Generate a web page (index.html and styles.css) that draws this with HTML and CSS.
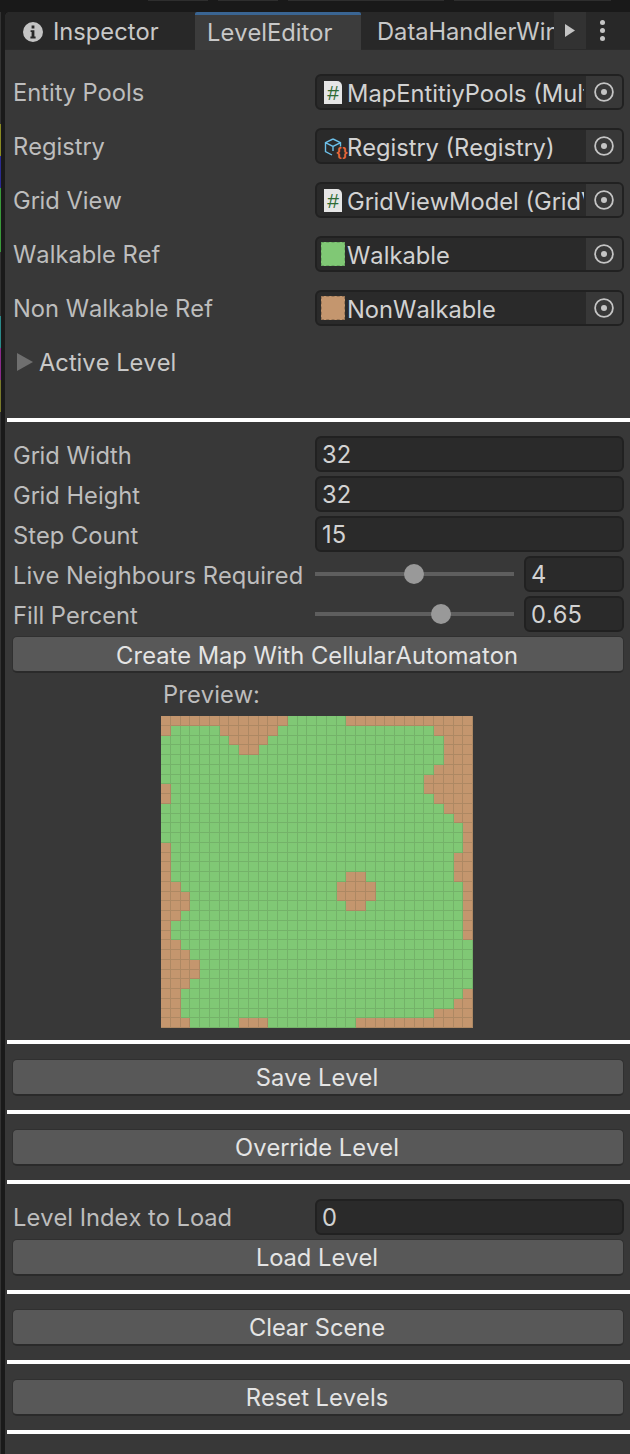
FILE: index.html
```html
<!DOCTYPE html>
<html>
	<head>
		<meta charset="UTF-8">
		<title>LevelEditor</title>
		<link rel="stylesheet" href="styles.css">
	</head>
	<body>
		<div class="topbar">
			<i style="width:60px;margin-left:148px"></i>
			<i style="width:60px"></i>
			<i style="width:156px"></i>
			<i style="width:157px"></i>
		</div>
		<div class="main">
			<div class="gutter"></div>
			<div class="panel">
				<div class="tabs">
					<div class="tab tab-inspector">
						<svg class="tab-icon" width="20" height="20" viewBox="0 0 20 20"><path fill="#c4c4c4" fill-rule="evenodd" d="M10 0a10 10 0 1 0 0 20a10 10 0 0 0 0-20zM8.6 3.6h2.8v2.8H8.6zM7.6 8.2h3.8v6.4h1.2v1.8H7.4v-1.8h1.2v-4.6h-1z"/></svg>
						Inspector
					</div>
					<div class="tab tab-active">LevelEditor</div>
					<div class="tab tab-clip">DataHandlerWindow</div>
					<div class="tab-more"><svg width="10" height="13" viewBox="0 0 10 13"><path fill="#c4c4c4" d="M0 0l10 6.5l-10 6.5z"/></svg></div>
					<div class="tab-menu"><b></b><b></b><b></b></div>
				</div>

				<div class="section refs">
					<div class="row">
						<div class="label">Entity Pools</div>
						<div class="field obj">
							<span class="cs-icon">#</span>
							<span class="obj-name">MapEntitiyPools (MultiPool)</span>
							<span class="picker"><svg width="20" height="20" viewBox="0 0 20 20"><circle cx="10" cy="10" r="8.9" fill="none" stroke="#c4c4c4" stroke-width="1.8"/><circle cx="10" cy="10" r="3" fill="#c4c4c4"/></svg></span>
						</div>
					</div>
					<div class="row">
						<div class="label">Registry</div>
						<div class="field obj">
							<span class="so-icon">
								<svg width="20" height="20" viewBox="0 0 20 20"><path fill="none" stroke="#6cbfe8" stroke-width="1.4" d="M9 1l7.5 3.6v4M9 1L1.5 4.6v9L8 17M1.5 4.6L9 8.4l7.5-3.8M9 8.4V13"/></svg>
								<span class="so-braces">{}</span>
							</span>
							<span class="obj-name">Registry (Registry)</span>
							<span class="picker"><svg width="20" height="20" viewBox="0 0 20 20"><circle cx="10" cy="10" r="8.9" fill="none" stroke="#c4c4c4" stroke-width="1.8"/><circle cx="10" cy="10" r="3" fill="#c4c4c4"/></svg></span>
						</div>
					</div>
					<div class="row">
						<div class="label">Grid View</div>
						<div class="field obj">
							<span class="cs-icon">#</span>
							<span class="obj-name">GridViewModel (GridViewModel)</span>
							<span class="picker"><svg width="20" height="20" viewBox="0 0 20 20"><circle cx="10" cy="10" r="8.9" fill="none" stroke="#c4c4c4" stroke-width="1.8"/><circle cx="10" cy="10" r="3" fill="#c4c4c4"/></svg></span>
						</div>
					</div>
					<div class="row">
						<div class="label">Walkable Ref</div>
						<div class="field obj">
							<span class="swatch swatch-green"></span>
							<span class="obj-name">Walkable</span>
							<span class="picker"><svg width="20" height="20" viewBox="0 0 20 20"><circle cx="10" cy="10" r="8.9" fill="none" stroke="#c4c4c4" stroke-width="1.8"/><circle cx="10" cy="10" r="3" fill="#c4c4c4"/></svg></span>
						</div>
					</div>
					<div class="row">
						<div class="label">Non Walkable Ref</div>
						<div class="field obj">
							<span class="swatch swatch-brown"></span>
							<span class="obj-name">NonWalkable</span>
							<span class="picker"><svg width="20" height="20" viewBox="0 0 20 20"><circle cx="10" cy="10" r="8.9" fill="none" stroke="#c4c4c4" stroke-width="1.8"/><circle cx="10" cy="10" r="3" fill="#c4c4c4"/></svg></span>
						</div>
					</div>
					<div class="foldout">
						<svg width="16" height="18" viewBox="0 0 16 18"><path fill="#6f6f6f" d="M0 0l16 9l-16 9z"/></svg>
						<span>Active Level</span>
					</div>
				</div>
				<div class="sep"></div>

				<div class="section gen">
					<div class="row">
						<div class="label">Grid Width</div>
						<div class="field text">32</div>
					</div>
					<div class="row">
						<div class="label">Grid Height</div>
						<div class="field text">32</div>
					</div>
					<div class="row">
						<div class="label">Step Count</div>
						<div class="field text">15</div>
					</div>
					<div class="row">
						<div class="label">Live Neighbours Required</div>
						<div class="slider">
							<div class="track"><span class="thumb" style="left:49.7%"></span></div>
							<div class="field text">4</div>
						</div>
					</div>
					<div class="row">
						<div class="label">Fill Percent</div>
						<div class="slider">
							<div class="track"><span class="thumb" style="left:63.3%"></span></div>
							<div class="field text">0.65</div>
						</div>
					</div>
					<div class="btn btn-create">Create Map With CellularAutomaton</div>
					<div class="preview">
						<div class="preview-label">Preview:</div>
						<div class="map" id="map"></div>
					</div>
				</div>
				<div class="sep"></div>

				<div class="section action">
					<div class="btn">Save Level</div>
				</div>
				<div class="sep"></div>

				<div class="section action">
					<div class="btn">Override Level</div>
				</div>
				<div class="sep"></div>

				<div class="section action">
					<div class="row">
						<div class="label">Level Index to Load</div>
						<div class="field text">0</div>
					</div>
					<div class="btn">Load Level</div>
				</div>
				<div class="sep"></div>

				<div class="section action">
					<div class="btn">Clear Scene</div>
				</div>
				<div class="sep"></div>

				<div class="section action">
					<div class="btn">Reset Levels</div>
				</div>
				<div class="sep"></div>
			</div>
		</div>
		<script src="map.js"></script>
	</body>
</html>
```

FILE: styles.css
```css
*{
	padding: 0px;margin: 0px;
	box-sizing: border-box;
}
html,body{
	width: 630px;height: 1454px;
	overflow: hidden;
}
body{
	background: #191919;
	font-family: "Inter", "Liberation Sans", sans-serif;
	font-size: 23.7px;
	font-kerning: none;
	color: #bdbdbd;
	display: flex;
	flex-direction: column;
}
.topbar{
	height: 12px;
	display: flex;
	gap: 10px;
	align-items: flex-start;
}
.topbar i{
	display: block;
	height: 1px;
	background: #2e2e2e;
}
.main{
	flex: 1;
	display: flex;
}
.gutter{
	width: 5px;
	background:
		linear-gradient(#333 0 112px, #8a8a22 112px 144px, #2a2a90 144px 176px, #3a9a3a 176px 240px, #333 240px 304px, #2a8a8a 304px 336px, #8a2a8a 336px 368px, #7a7a2a 368px 400px, #333 400px) left top / 1px 100% no-repeat,
		#1a1a1a;
}
.panel{
	flex: 1;
	background: #383838;
	border-top-left-radius: 5px;
	overflow: hidden;
}

/* tabs */
.tabs{
	height: 38px;
	background: #282828;
	display: flex;
	align-items: stretch;
	border-bottom: 1px solid #2a2a2a;
}
.tab{
	display: flex;
	align-items: center;
	padding-top: 2px;
	color: #c8c8c8;
	white-space: nowrap;
	overflow: hidden;
}
.tab-inspector{
	width: 190px;
	padding-left: 18px;
	gap: 10px;
}
.tab-active{
	width: 166px;
	background: #3c3c3c;
	border-top: 3px solid #3a6593;
	border-top-left-radius: 2px;
	border-top-right-radius: 2px;
	padding-left: 12px;
	padding-top: 0;
	height: 38px;
}
.tab-clip{
	width: 193px;
	padding-left: 16px;
}
.tab-more{
	width: 32px;
	background: #323232;
	display: flex;
	align-items: center;
	justify-content: center;
}
.tab-menu{
	width: 32px;
	display: flex;
	flex-direction: column;
	align-items: center;
	justify-content: center;
	gap: 3px;
}
.tab-menu b{
	display: block;
	width: 5px;height: 5px;
	border-radius: 50%;
	background: #c4c4c4;
}

/* rows and fields */
.section{
	padding: 0 6px 0 7px;
	display: flex;
	flex-direction: column;
}
.refs{
	padding-top: 24px;
	padding-bottom: 38px;
	gap: 18px;
}
.gen{
	padding-top: 14px;
	padding-bottom: 12px;
	gap: 4px;
}
.action{
	padding-top: 15px;
	padding-bottom: 14px;
	gap: 4px;
}
.row{
	display: grid;
	grid-template-columns: 303px 309px;
	height: 36px;
	align-items: center;
}
.label{
	padding-left: 1px;
	white-space: nowrap;
}
.gen .label{
	padding-top: 2px;
}
.field{
	height: 36px;
	background: #2a2a2a;
	border: 2px solid #212121;
	border-radius: 6px;
	color: #d2d2d2;
	white-space: nowrap;
	overflow: hidden;
}
.text{
	padding-left: 5px;
	line-height: 34px;
}
.obj{
	display: flex;
	align-items: center;
	position: relative;
	padding-left: 4px;
}
.obj-name{
	flex: 1;
	min-width: 0;
	overflow: hidden;
	padding-top: 2px;
	margin-right: 2px;
}
.picker{
	flex: none;
	width: 36px;height: 32px;
	background: #383838;
	display: flex;
	align-items: center;
	justify-content: center;
}
.cs-icon{
	flex: none;
	width: 18px;height: 23px;
	margin-left: 3px;margin-right: 5px;
	background: #e6e6e6;
	border-top-right-radius: 5px;
	color: #2f6b35;
	font-family: "Liberation Sans", sans-serif;
	font-size: 21px;
	line-height: 23px;
	text-align: center;
}
.so-icon{
	flex: none;
	width: 22px;height: 22px;
	position: relative;
	margin-left: 3px;margin-right: 1px;
}
.so-braces{
	position: absolute;
	right: -2px;bottom: -2px;
	color: #e8683a;
	font-size: 13px;
	font-weight: bold;
	line-height: 14px;
}
.swatch{
	flex: none;
	width: 24px;height: 24px;
	margin-right: 2px;
}
.swatch-green{
	background: #80c875;
	border: 1px dashed #6aa862;
}
.swatch-brown{
	background: #c4966e;
	border: 1px dashed #9a7656;
}
.foldout{
	height: 36px;
	display: flex;
	align-items: center;
	gap: 6px;
	padding-left: 5px;
	color: #c8c8c8;
}

/* sliders */
.slider{
	display: grid;
	grid-template-columns: 199px 100px;
	gap: 10px;
	align-items: center;
}
.track{
	height: 4px;
	background: #5e5e5e;
	position: relative;
}
.thumb{
	position: absolute;
	top: -8px;
	width: 20px;height: 20px;
	margin-left: -10px;
	border-radius: 50%;
	background: #999;
}

/* buttons */
.btn{
	height: 37px;
	width: 612px;
	padding-right: 2px;
	background: #585858;
	border: 1px solid #303030;
	border-bottom: 2px solid #2a2a2a;
	border-radius: 5px;
	color: #e4e4e4;
	text-align: center;
	line-height: 35px;
}
.btn-create{
	line-height: 37px;
}
.sep{
	height: 4px;
	margin-left: 2px;
	background: #fff;
}

/* preview */
.preview{
	padding-left: 149px;
}
.preview-label{
	height: 39px;
	padding-left: 2px;
	line-height: 36px;
}
.map{
	width: 312px;height: 312px;
	display: grid;
	grid-template-columns: repeat(32, 1fr);
	grid-template-rows: repeat(32, 1fr);
}
.cell{
	background: #80c875;
	border-right: 1px solid rgba(60,70,50,0.17);
	border-bottom: 1px solid rgba(60,70,50,0.17);
}
.cell.wall{
	background: #c4966e;
}
```

FILE: map.js
```js
// brown runs per row: [from, to] columns, both included
var walls=[
	[[0,12],[19,31]],
	[[0,0],[6,11],[28,31]],
	[[7,10],[29,31]],
	[[8,9],[29,31]],
	[[29,31]],
	[[28,31]],
	[[27,31]],
	[[0,0],[27,31]],
	[[0,0],[28,31]],
	[[29,31]],
	[[30,31]],
	[[31,31]],
	[[31,31]],
	[[0,0],[31,31]],
	[[0,0],[30,31]],
	[[0,0],[30,31]],
	[[0,0],[19,20],[30,31]],
	[[0,1],[18,21],[31,31]],
	[[0,2],[18,21],[31,31]],
	[[0,2],[19,20],[31,31]],
	[[0,1],[31,31]],
	[[0,0],[31,31]],
	[[0,0],[31,31]],
	[[0,1]],
	[[0,2]],
	[[0,3]],
	[[0,3]],
	[[0,2]],
	[[0,1],[31,31]],
	[[0,1],[30,31]],
	[[0,1],[28,31]],
	[[0,2],[8,10],[20,31]]
];
var oMap=document.getElementById('map');
for(var r=0;r<32;r++){
	for(var c=0;c<32;c++){
		var oCell=document.createElement('div');
		oCell.className='cell';
		for(var i=0;i<walls[r].length;i++){
			if(c>=walls[r][i][0]&&c<=walls[r][i][1]){
				oCell.className='cell wall';
			}
		}
		oMap.appendChild(oCell);
	}
}
```
